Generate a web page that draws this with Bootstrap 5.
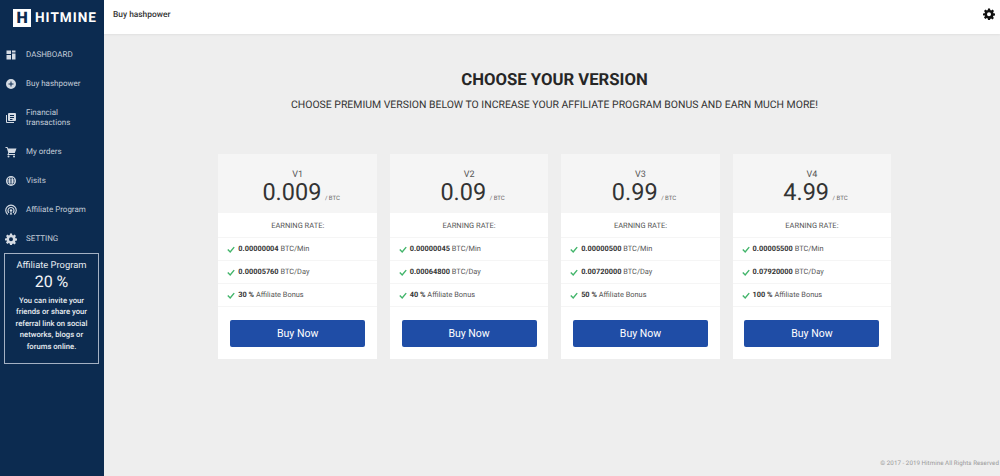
<!DOCTYPE html>
<html lang="en"><head><meta charset="utf-8"><title>Hitmine</title>
<link href="https://cdn.jsdelivr.net/npm/bootstrap@5.3.0/dist/css/bootstrap.min.css" rel="stylesheet">
<style>
html,body{height:100%;overflow:hidden}
body{font-family:Roboto,"Liberation Sans",sans-serif;background:#eee;color:#333;text-rendering:geometricPrecision}
.shell{height:476px}
.side{width:104px;background:#0c2b50;color:#c3ccd8}
.brand{height:34px;padding-left:13px;padding-top:2px;color:#fff;font-size:13.6px;font-weight:700;letter-spacing:1px}
.brand-mark{width:18px;height:18px;background:#fff;color:#0c2b50;font-size:16px;font-weight:900;line-height:18px;letter-spacing:0;margin-right:4px;text-align:center}
.side-menu{padding-top:6px}
.side-item{min-height:29px;padding-left:5px;font-size:8px;line-height:10px;color:#c3ccd8}
.side-ico{width:12px;height:12px;margin-right:9px;flex:none;fill:#d5dbe3}
.side-item.tall{min-height:39px}
.promo{width:95px;height:111px;margin:0 0 0 4px;border:1px solid #a4b1c3;color:#e7ebf0;padding-top:5px}
.promo-title{font-size:9.4px;line-height:13px}
.promo-num{font-size:16px;line-height:20px;margin-bottom:3px;color:#f2f4f7}
.promo-text{font-size:7.7px;line-height:11.4px;font-weight:500;padding:0 5px}
.topbar{height:34px;background:#fff;padding:0 5px 0 9px;box-shadow:0 1px 2px rgba(0,0,0,.06)}
.topbar-title{font-size:8.4px;font-weight:500;color:#333;margin-top:-3px}
.main-wrap{min-width:0}
.heading{font-size:16.7px;font-weight:700;line-height:20px;color:#262626;margin:37px 0 0 0;padding-left:5px}
.subhead{font-size:10.45px;line-height:12px;color:#333;margin-top:8px;padding-left:5px}
.plans{width:673px;margin:43px 0 0 114.3px;display:grid;grid-template-columns:repeat(4,1fr);column-gap:12.67px}
.plan{background:#fff;height:205px}
.plan-head{height:59px;background:#f5f5f5;padding-top:16px;color:#333}
.plan-ver{font-size:9px;line-height:10px;color:#555}
.plan-price{font-size:23.5px;line-height:24px;color:#333;padding-left:7px}
.plan-unit{font-size:6px;color:#666;margin-left:2px}
.plan-row{height:23px;padding-left:9px;font-size:7.4px;color:#555;border-bottom:1px solid #f5f5f5}
.plan-row b{color:#333;font-weight:700}
.plan-first{justify-content:center;padding-left:0;padding-top:1px;font-size:7.5px;height:25px;color:#555}
.tick{width:8px;height:7px;margin-right:3px;flex:none}
.buy{background:#1f4da6;border:0;border-radius:2px;width:135px;height:27px;margin:13px auto 0;padding:0;font-size:10.5px;color:#fff;display:block}
.buy:hover{background:#1f4da6;color:#fff}
.foot{font-size:6.2px;color:#999;line-height:8px;margin:0 1px 9px 0;letter-spacing:.05px}
.gear{width:12px;height:12px;margin-top:-6px}
</style></head>
<body>
<div class="shell d-flex">
<aside class="side d-flex flex-column flex-shrink-0">
  <div class="brand d-flex align-items-center"><span class="brand-mark">H</span>HITMINE</div>
  <nav class="side-menu">
    <div class="side-item d-flex align-items-center"><svg class="side-ico" viewBox="0 0 24 24"><path d="M3 3h9v7H3zM14 3h7v4h-7zM14 9h7v12h-7zM3 12h9v9H3z"/></svg>DASHBOARD</div>
    <div class="side-item d-flex align-items-center"><svg class="side-ico" viewBox="0 0 24 24"><path fill-rule="evenodd" d="M12 2a10 10 0 1 0 0 20 10 10 0 0 0 0-20zm1 5h-2v4H7v2h4v4h2v-4h4v-2h-4z"/></svg>Buy hashpower</div>
    <div class="side-item tall d-flex align-items-center"><svg class="side-ico" viewBox="0 0 24 24"><path d="M2 6h2v14h14v2H4a2 2 0 0 1-2-2z"/><path fill-rule="evenodd" d="M8 2h12a2 2 0 0 1 2 2v12a2 2 0 0 1-2 2H8a2 2 0 0 1-2-2V4a2 2 0 0 1 2-2zm2 4v2h8V6zm0 4v2h8v-2zm0 4v2h5v-2z"/></svg><span>Financial<br>transactions</span></div>
    <div class="side-item d-flex align-items-center"><svg class="side-ico" viewBox="0 0 24 24"><path d="M1 2h4l1 3h17l-3.500 9H8.200L7.400 16H20v2H4.500l2-4.500L3.700 4H1z"/><circle cx="7" cy="21" r="2"/><circle cx="18" cy="21" r="2"/></svg>My orders</div>
    <div class="side-item d-flex align-items-center"><svg class="side-ico" viewBox="0 0 24 24"><path fill-rule="evenodd" d="M12 2a10 10 0 1 0 0 20 10 10 0 0 0 0-20zM9.500 4.600C8.700 6 8.200 7.500 8 9H4.800a8 8 0 0 1 4.700-4.400zM12 4.100c.9 1.300 1.500 3 1.800 4.900h-3.600c.3-1.900.9-3.600 1.800-4.900zm2.500.5A8 8 0 0 1 19.200 9H16c-.2-1.500-.7-3-1.500-4.400zM4.300 11H8v2H4.300a8 8 0 0 1 0-2zM10 11h4v2h-4zm6 0h3.700a8 8 0 0 1 0 2H16zM4.800 15H8c.2 1.500.7 3 1.500 4.400A8 8 0 0 1 4.800 15zm5.400 0h3.600c-.3 1.900-.9 3.600-1.800 4.900-.9-1.300-1.500-3-1.800-4.900zM16 15h3.200a8 8 0 0 1-4.700 4.400c.8-1.400 1.300-2.900 1.500-4.400z"/></svg>Visits</div>
    <div class="side-item d-flex align-items-center"><svg class="side-ico" viewBox="0 0 24 24"><path fill="none" stroke="#d5dbe3" stroke-width="2.300" d="M5.500 21A10.500 10.500 0 1 1 18.500 21M8 17.500a6 6 0 1 1 8 0"/><circle cx="12" cy="13" r="2.500"/><path d="M9.500 21l2.500-6 2.500 6z"/></svg>Affiliate Program</div>
    <div class="side-item d-flex align-items-center"><svg class="side-ico" viewBox="0 0 24 24"><path fill-rule="evenodd" d="M10 1h4l.6 3.200 1.900.8 2.700-1.800 2.800 2.800-1.800 2.700.8 1.900L24 11v4l-3.200.6-.8 1.900 1.800 2.700-2.800 2.800-2.700-1.800-1.900.8L14 24h-4l-.6-3.200-1.900-.8-2.700 1.800L2 19l1.800-2.700-.8-1.900L0 15v-4l3.200-.6.800-1.900L2 5.800 5 3l2.700 1.800 1.900-.8zm2 7.500a4 4 0 1 0 0 8 4 4 0 0 0 0-8z"/></svg>SETTING</div>
  </nav>
  <div class="promo text-center">
    <div class="promo-title">Affiliate Program</div>
    <div class="promo-num">20 %</div>
    <div class="promo-text">You can invite your friends or share your referral link on social networks, blogs or forums online.</div>
  </div>
</aside>
<div class="main-wrap flex-grow-1 d-flex flex-column">
  <header class="topbar d-flex align-items-center justify-content-between">
    <span class="topbar-title">Buy hashpower</span>
    <svg class="gear" viewBox="0 0 24 24" fill="#111"><path fill-rule="evenodd" d="M10 1h4l.6 3.200 1.900.8 2.700-1.800 2.800 2.800-1.800 2.700.8 1.900L24 11v4l-3.200.6-.8 1.900 1.800 2.700-2.800 2.800-2.700-1.800-1.900.8L14 24h-4l-.6-3.200-1.900-.8-2.700 1.800L2 19l1.800-2.700-.8-1.900L0 15v-4l3.200-.6.800-1.900L2 5.800 5 3l2.700 1.800 1.900-.8zm2 7.500a4 4 0 1 0 0 8 4 4 0 0 0 0-8z"/></svg>
  </header>
  <main class="flex-grow-1">
    <h1 class="heading text-center">CHOOSE YOUR VERSION</h1>
    <p class="subhead text-center mb-0">CHOOSE PREMIUM VERSION BELOW TO INCREASE YOUR AFFILIATE PROGRAM BONUS AND EARN MUCH MORE!</p>
    <div class="plans">
      <div class="plan">
        <div class="plan-head text-center"><div class="plan-ver">V1</div><div class="plan-price">0.009<span class="plan-unit"> / BTC</span></div></div>
        <div class="plan-row plan-first d-flex align-items-center">EARNING RATE:</div>
        <div class="plan-row d-flex align-items-center"><svg class="tick" viewBox="0 0 10 8"><path d="M1 4l3 3 5-6" fill="none" stroke="#43b56b" stroke-width="1.800"/></svg><span><b>0.00000004</b> BTC/Min</span></div>
        <div class="plan-row d-flex align-items-center"><svg class="tick" viewBox="0 0 10 8"><path d="M1 4l3 3 5-6" fill="none" stroke="#43b56b" stroke-width="1.800"/></svg><span><b>0.00005760</b> BTC/Day</span></div>
        <div class="plan-row d-flex align-items-center"><svg class="tick" viewBox="0 0 10 8"><path d="M1 4l3 3 5-6" fill="none" stroke="#43b56b" stroke-width="1.800"/></svg><span><b>30 %</b> Affiliate Bonus</span></div>
        <button class="btn buy">Buy Now</button>
      </div>
      <div class="plan">
        <div class="plan-head text-center"><div class="plan-ver">V2</div><div class="plan-price">0.09<span class="plan-unit"> / BTC</span></div></div>
        <div class="plan-row plan-first d-flex align-items-center">EARNING RATE:</div>
        <div class="plan-row d-flex align-items-center"><svg class="tick" viewBox="0 0 10 8"><path d="M1 4l3 3 5-6" fill="none" stroke="#43b56b" stroke-width="1.800"/></svg><span><b>0.00000045</b> BTC/Min</span></div>
        <div class="plan-row d-flex align-items-center"><svg class="tick" viewBox="0 0 10 8"><path d="M1 4l3 3 5-6" fill="none" stroke="#43b56b" stroke-width="1.800"/></svg><span><b>0.00064800</b> BTC/Day</span></div>
        <div class="plan-row d-flex align-items-center"><svg class="tick" viewBox="0 0 10 8"><path d="M1 4l3 3 5-6" fill="none" stroke="#43b56b" stroke-width="1.800"/></svg><span><b>40 %</b> Affiliate Bonus</span></div>
        <button class="btn buy">Buy Now</button>
      </div>
      <div class="plan">
        <div class="plan-head text-center"><div class="plan-ver">V3</div><div class="plan-price">0.99<span class="plan-unit"> / BTC</span></div></div>
        <div class="plan-row plan-first d-flex align-items-center">EARNING RATE:</div>
        <div class="plan-row d-flex align-items-center"><svg class="tick" viewBox="0 0 10 8"><path d="M1 4l3 3 5-6" fill="none" stroke="#43b56b" stroke-width="1.800"/></svg><span><b>0.00000500</b> BTC/Min</span></div>
        <div class="plan-row d-flex align-items-center"><svg class="tick" viewBox="0 0 10 8"><path d="M1 4l3 3 5-6" fill="none" stroke="#43b56b" stroke-width="1.800"/></svg><span><b>0.00720000</b> BTC/Day</span></div>
        <div class="plan-row d-flex align-items-center"><svg class="tick" viewBox="0 0 10 8"><path d="M1 4l3 3 5-6" fill="none" stroke="#43b56b" stroke-width="1.800"/></svg><span><b>50 %</b> Affiliate Bonus</span></div>
        <button class="btn buy">Buy Now</button>
      </div>
      <div class="plan">
        <div class="plan-head text-center"><div class="plan-ver">V4</div><div class="plan-price">4.99<span class="plan-unit"> / BTC</span></div></div>
        <div class="plan-row plan-first d-flex align-items-center">EARNING RATE:</div>
        <div class="plan-row d-flex align-items-center"><svg class="tick" viewBox="0 0 10 8"><path d="M1 4l3 3 5-6" fill="none" stroke="#43b56b" stroke-width="1.800"/></svg><span><b>0.00005500</b> BTC/Min</span></div>
        <div class="plan-row d-flex align-items-center"><svg class="tick" viewBox="0 0 10 8"><path d="M1 4l3 3 5-6" fill="none" stroke="#43b56b" stroke-width="1.800"/></svg><span><b>0.07920000</b> BTC/Day</span></div>
        <div class="plan-row d-flex align-items-center"><svg class="tick" viewBox="0 0 10 8"><path d="M1 4l3 3 5-6" fill="none" stroke="#43b56b" stroke-width="1.800"/></svg><span><b>100 %</b> Affiliate Bonus</span></div>
        <button class="btn buy">Buy Now</button>
      </div>
    </div>
  </main>
  <footer class="foot text-end">© 2017 - 2019 Hitmine All Rights Reserved</footer>
</div>
</div>
<script src="https://cdn.jsdelivr.net/npm/bootstrap@5.3.0/dist/js/bootstrap.bundle.min.js"></script>
</body></html>
